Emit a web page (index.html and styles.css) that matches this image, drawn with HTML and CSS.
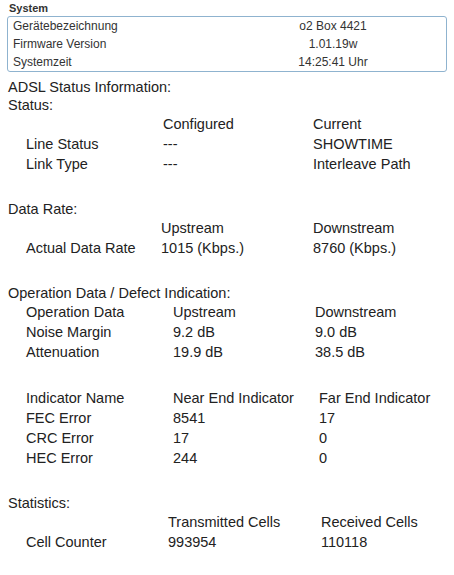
FILE: index.html
```html
<!DOCTYPE html>
<html lang="de">
<head>
<meta charset="utf-8">
<title>System</title>
<link rel="stylesheet" href="styles.css">
</head>
<body>
<div class="page">
  <div class="sys-title">System</div>
  <div class="sys-box">
    <div class="sys-row"><span>Gerätebezeichnung</span><span class="sys-val">o2 Box 4421</span></div>
    <div class="sys-row"><span>Firmware Version</span><span class="sys-val">1.01.19w</span></div>
    <div class="sys-row"><span>Systemzeit</span><span class="sys-val">14:25:41 Uhr</span></div>
  </div>

  <div class="adsl">
    <div class="heading">ADSL Status Information:</div>
    <div class="heading">Status:</div>
    <div class="tbl t-status">
      <span></span><span>Configured</span><span>Current</span>
      <span>Line Status</span><span>---</span><span>SHOWTIME</span>
      <span>Link Type</span><span>---</span><span>Interleave Path</span>
    </div>

    <div class="heading gap">Data Rate:</div>
    <div class="tbl t-rate">
      <span></span><span>Upstream</span><span>Downstream</span>
      <span>Actual Data Rate</span><span>1015 (Kbps.)</span><span>8760 (Kbps.)</span>
    </div>

    <div class="heading gap">Operation Data / Defect Indication:</div>
    <div class="tbl t-op">
      <span>Operation Data</span><span>Upstream</span><span>Downstream</span>
      <span>Noise Margin</span><span>9.2 dB</span><span>9.0 dB</span>
      <span>Attenuation</span><span>19.9 dB</span><span>38.5 dB</span>
    </div>

    <div class="tbl t-ind gap">
      <span>Indicator Name</span><span>Near End Indicator</span><span>Far End Indicator</span>
      <span>FEC Error</span><span>8541</span><span>17</span>
      <span>CRC Error</span><span>17</span><span>0</span>
      <span>HEC Error</span><span>244</span><span>0</span>
    </div>

    <div class="heading gap">Statistics:</div>
    <div class="tbl t-stat">
      <span></span><span>Transmitted Cells</span><span>Received Cells</span>
      <span>Cell Counter</span><span>993954</span><span>110118</span>
    </div>
  </div>
</div>
</body>
</html>
```

FILE: styles.css
```css
body {
  margin: 0;
  background: #ffffff;
  color: #222222;
  font-family: "Liberation Sans", Arial, sans-serif;
}

.page {
  padding: 1px 7px 0 7px;
}

.sys-title {
  font-weight: bold;
  font-size: 11px;
  line-height: 14px;
  padding-left: 2px;
  color: #333333;
}

.sys-box {
  margin-top: 1px;
  border: 1px solid #8fb3cf;
  border-radius: 3px;
  font-size: 12px;
  color: #333333;
}

.sys-row {
  display: grid;
  grid-template-columns: 1fr 226px;
  height: 18px;
  line-height: 18px;
  padding-left: 5px;
}

.sys-val {
  text-align: center;
}

.adsl {
  margin-top: 6px;
  padding-left: 1px;
  font-size: 14.5px;
}

.heading {
  line-height: 18px;
}

.tbl {
  display: grid;
  margin-left: 18px;
  grid-auto-rows: 20px;
  line-height: 20px;
  white-space: nowrap;
}

.gap {
  margin-top: 26px;
}

.t-status { grid-template-columns: 137px 150px auto; }
.t-rate   { grid-template-columns: 135px 152px auto; }
.t-op     { grid-template-columns: 147px 142px auto; }
.t-ind    { grid-template-columns: 147px 146px auto; }
.t-stat   { grid-template-columns: 142px 153px auto; }
```
